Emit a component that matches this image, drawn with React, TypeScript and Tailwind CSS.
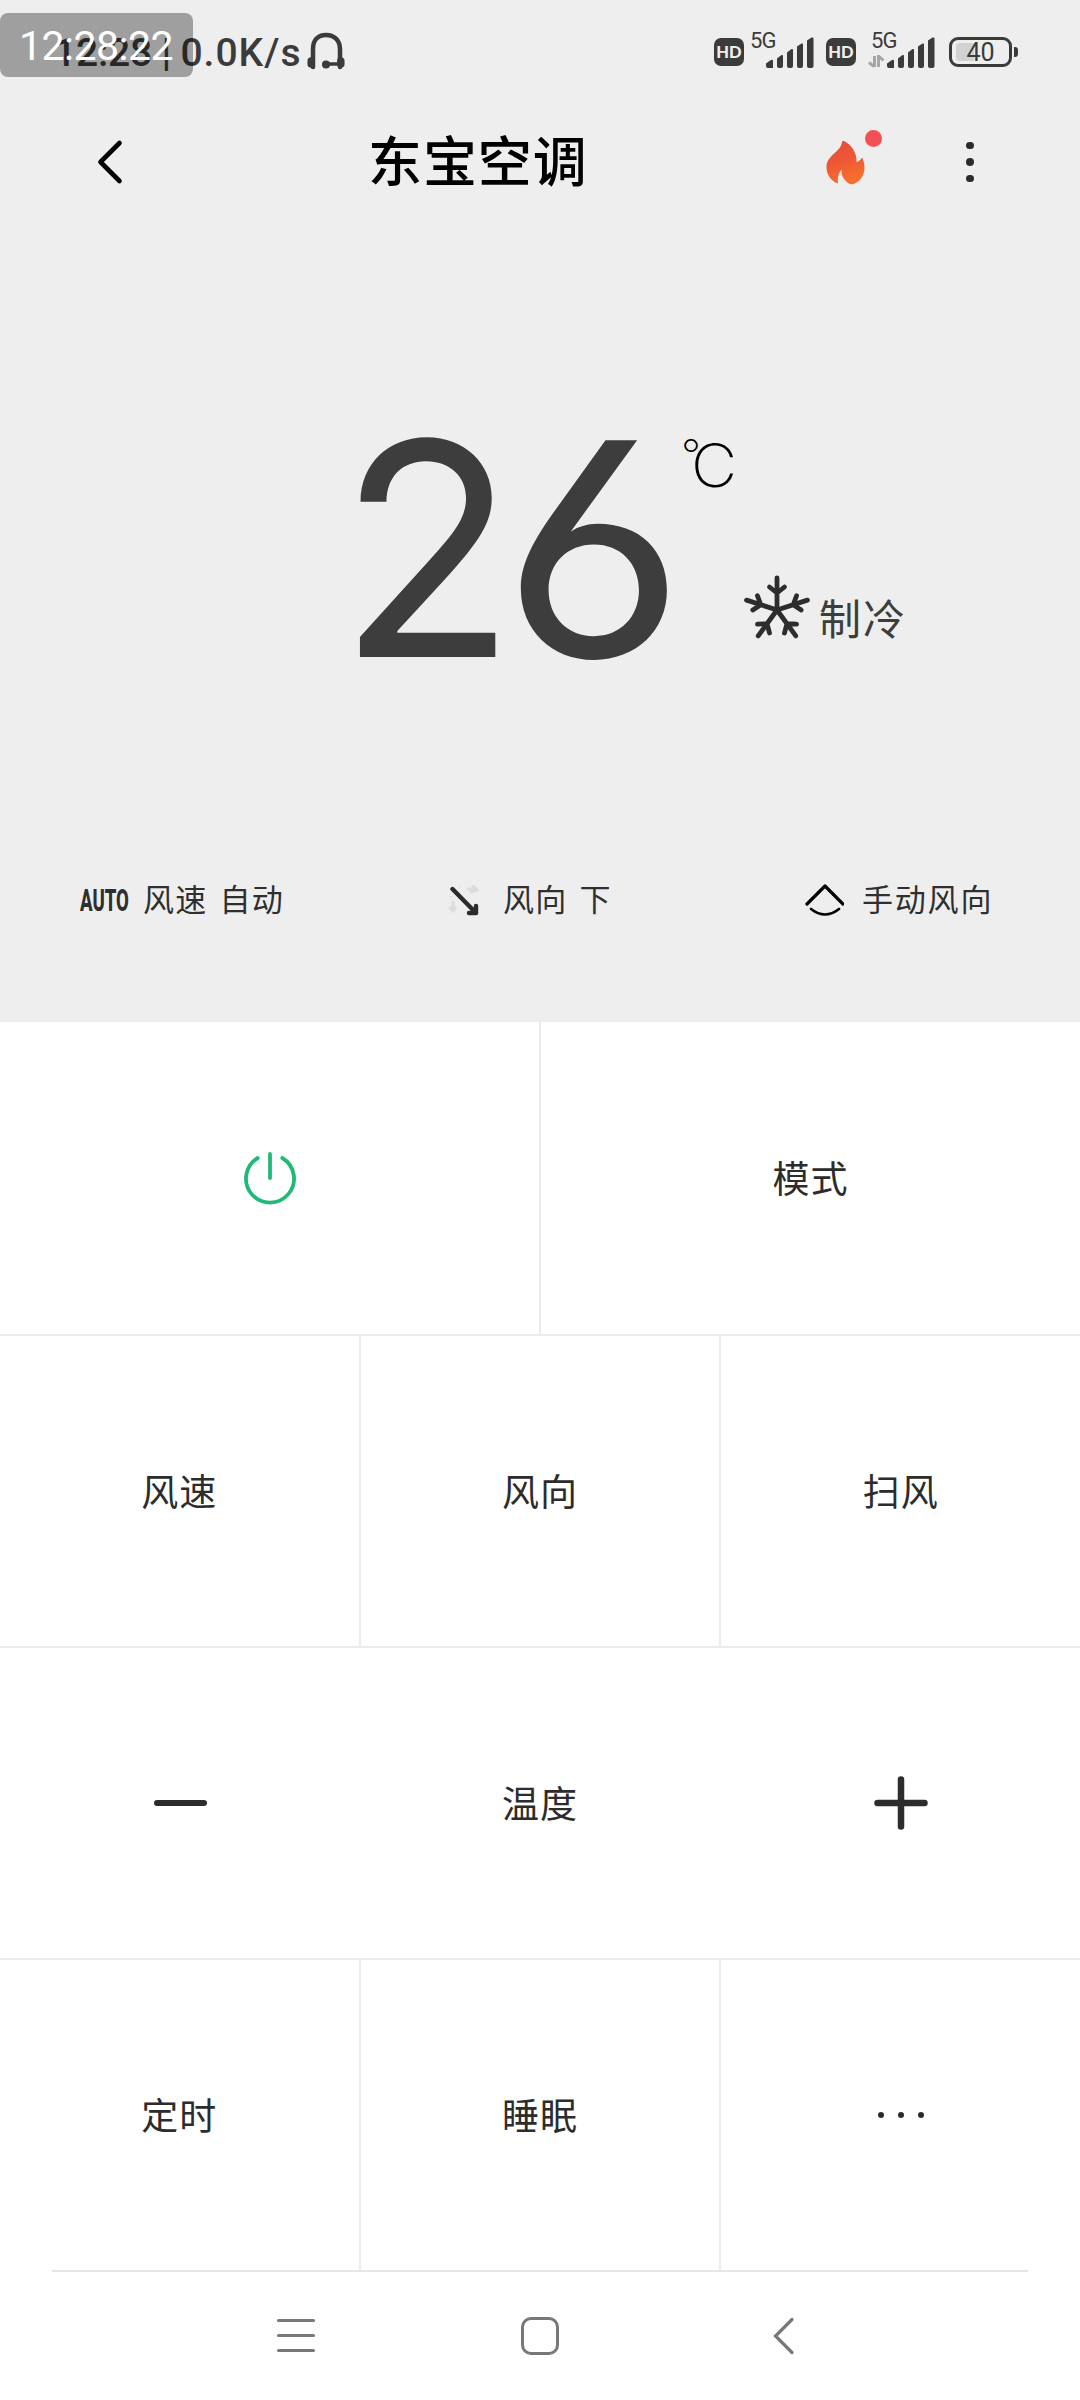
import type { ReactNode } from "react";

function Headphones() {
  return (
    <svg className="ml-[7px] mt-[32px] h-[38px] w-[38px]" viewBox="0 0 38 38" fill="none" stroke="#3b3b3b">
      <path d="M6 35V17C6 8 11 3 19 3s14 5 14 14v18" strokeWidth="4.500" strokeLinecap="round" />
      <path d="M19 32h14" strokeWidth="3.500" />
      <circle cx="19" cy="32.500" r="4" fill="#3b3b3b" stroke="none" />
      <path d="M4.200 29v3M33.800 29v3" strokeWidth="7.500" strokeLinecap="round" />
    </svg>
  );
}

function Hd() {
  return (
    <div className="mt-[38px] flex h-[28px] w-[30px] items-center justify-center rounded-[7px] bg-[#3b3b3b] font-[Lato] text-[16.500px] font-black leading-none text-[#ededed]">
      HD
    </div>
  );
}

function Signal({ data }: { data?: boolean }) {
  return (
    <div className="relative h-[80px] w-[64px]">
      <span className="absolute -left-[1px] top-[30px] text-[22px] leading-[22px] tracking-[-0.8px]">5G</span>
      {data && (
        <svg className="absolute -left-[4px] top-[55px] h-[13px] w-[17px]" viewBox="0 0 17 13" fill="none" stroke="#a5a5a5" strokeWidth="3">
          <path d="M6.500 1v11M1 7.500l5 4M10.500 12V1l5 4.500" />
        </svg>
      )}
      <svg className="absolute left-[15px] top-[37px] h-[31px] w-[48px]" viewBox="0 0 48 31" fill="#3b3b3b">
        <path d="M0 26.500L5 23q2-1 2 1v7H2q-2 0-2-2z" />
        <path d="M11 21.500L15.500 18q1.500-.5 1.500 1v10q0 2-2 2h-2q-2 0-2-2z" />
        <path d="M21 15.500L25.500 12q1.500-.5 1.500 1v16q0 2-2 2h-2q-2 0-2-2z" />
        <path d="M31 9.500L35.500 6.500q1.500-.5 1.500 1v21.500q0 2-2 2h-2q-2 0-2-2z" />
        <path d="M41 3.500L45.500.5q2-.5 2 1v27.500q0 2-2 2h-2.500q-2 0-2-2z" />
      </svg>
    </div>
  );
}

function StatusBar() {
  return (
    <div className="relative flex h-[104px] font-[Roboto] text-[#3b3b3b]">
      <div className="ml-[54px] mt-[30px] w-[246px] whitespace-pre text-[39px] font-medium leading-[46px] tracking-[-0.2px]">
        12:28 | <span className="tracking-[1px]">0.0K/s</span>
      </div>
      <Headphones />
      <div className="ml-auto flex">
        <Hd />
        <div className="ml-[7px]"><Signal /></div>
        <div className="ml-[11px]"><Hd /></div>
        <div className="ml-[16px]"><Signal data /></div>
      </div>
      <div className="relative ml-[13px] mr-[5px] mt-[37px] flex h-[30px] w-[63px] items-center justify-center rounded-[9px] border-[3px] border-[#3b3b3b] text-[25px] leading-none">
        <div className="absolute left-[4px] top-[3px] h-[18px] w-[18px] rounded-l-[4px] bg-[#d2d2d2]"></div>
        <span className="relative">40</span>
      </div>
      <div className="-ml-[3px] mr-[62px] mt-[47px] h-[10px] w-[4px] rounded-r-[3px] bg-[#3b3b3b]"></div>

      {/* recorder clock floats over the status bar */}
      <div className="absolute left-0 top-[13px] h-[64px] w-[193px] rounded-[8px] bg-black/33 pl-[19px] text-[41px] leading-[66px] tracking-[-0.5px] text-white">
        12:28:22
      </div>
    </div>
  );
}

function Header() {
  return (
    <div className="flex h-[116px] items-center">
      <svg className="ml-[94px] h-[48px] w-[32px]" viewBox="0 0 32 48" fill="none" stroke="#000" strokeWidth="4.600" strokeLinecap="round" strokeLinejoin="round">
        <path d="M25.500 5L6.500 24l19 19" />
      </svg>
      <h1 className="-mt-[7px] ml-[242px] w-[225px] whitespace-nowrap text-[54px] font-medium leading-[60px] tracking-[0.9px] text-black">东宝空调</h1>
      <div className="relative ml-[233px] h-[48px] w-[44px]">
        <svg className="h-[48px] w-[44px]" viewBox="0 0 44 48">
          <defs>
            <linearGradient id="fire" x1="0" y1="0" x2="0.300" y2="1">
              <stop offset="0" stopColor="#ea4a42" />
              <stop offset="0.500" stopColor="#ed5637" />
              <stop offset="1" stopColor="#f76f2c" />
            </linearGradient>
          </defs>
          <path
            d="M18 3c8 4 13 12 12.500 21 2.500-.5 4-2 5-4 1.500 0 3 5 3 10 0 8-5 14-11 16-1.500.6-3 .4-4.500-.5-5-3-8-8-7.500-14-3 4-4 8-3.500 14C5 43 .5 37 .5 29 .5 17 15 14 16 4q.5-2 2-1z"
            fill="url(#fire)"
          />
        </svg>
        <div className="absolute -top-[8px] left-[39px] h-[17px] w-[17px] rounded-full bg-[#f25054]"></div>
      </div>
      <div className="ml-[96px] flex flex-col gap-[9px]">
        <div className="h-[7.500px] w-[7.500px] rounded-full bg-[#2b2b2b]"></div>
        <div className="h-[7.500px] w-[7.500px] rounded-full bg-[#2b2b2b]"></div>
        <div className="h-[7.500px] w-[7.500px] rounded-full bg-[#2b2b2b]"></div>
      </div>
    </div>
  );
}

function Snowflake() {
  return (
    <svg className="h-[70px] w-[70px]" viewBox="-35 -35 70 70" fill="none" stroke="#2d2d2d" strokeWidth="4.800" strokeLinecap="round" strokeLinejoin="round">
      {[0, 72, 144, 216, 288].map((a) => (
        <path key={a} d="M0 0V-32M-7.500-23L0-17 7.500-23" transform={`rotate(${a})`} />
      ))}
    </svg>
  );
}

function Display() {
  return (
    <div className="flex h-[610px] pt-[180px] text-[#3d3d3d]">
      <div className="ml-[338px] flex h-[300px] w-[343px] font-[Inter] text-[298px] leading-[298px]">
        <span className="w-[164px] origin-left scale-x-[0.980]">2</span>
        <span className="origin-left scale-x-[1.060] [font-feature-settings:'cv03','cv04']">6</span>
      </div>
      <div className="flex w-[57px] pt-[25px] font-[Inter] text-black">
        <span className="text-[44px] font-extralight leading-[60px]">°</span>
        <span className="-ml-[10px] origin-left scale-x-[1.060] text-[60px] font-extralight leading-[80px]">C</span>
      </div>
      <div className="ml-[4px] mt-[175px] flex h-[70px]">
        <Snowflake />
        <span className="ml-[7px] mt-[12px] text-[42px] font-normal leading-[60px] tracking-[2px]">制冷</span>
      </div>
    </div>
  );
}

function StatusRow() {
  return (
    <div className="flex h-[192px] items-start pt-[45px] text-[31px] leading-[46px] text-[#2f2f2f]">
      <div className="ml-[80px] h-[46px] w-[63px]">
        <span className="inline-block origin-left scale-x-[0.600] font-[Roboto] text-[31px] font-extrabold">AUTO</span>
      </div>
      <span className="w-[304px] tracking-[1.200px] [word-spacing:4px]">风速 自动</span>
      <svg className="mt-[10px] h-[32px] w-[32px]" viewBox="0 0 32 32" fill="none">
        <path d="M12 2h1M20 4h8M25 0l5 5-7 2M4 11v1M6 16v8M2 22l4 4 3-4" stroke="#dcdcdc" strokeWidth="3" />
        <path d="M5.500 4L29 28M29 21v7h-7" stroke="#2b2b2b" strokeWidth="4.400" strokeLinecap="round" strokeLinejoin="round" />
      </svg>
      <span className="ml-[24px] w-[301px] tracking-[1.200px] [word-spacing:4px]">风向 下</span>
      <svg className="mt-[8px] h-[36px] w-[40px]" viewBox="0 0 40 36" fill="none" stroke="#000" strokeWidth="3.200" strokeLinecap="round" strokeLinejoin="round">
        <path d="M3 21L21 3l18 18" />
        <path d="M7 26q14 11 28 0" strokeWidth="2.600" />
      </svg>
      <span className="ml-[18px] tracking-[1.800px]">手动风向</span>
    </div>
  );
}

function Key({ children }: { children: ReactNode }) {
  return <button className="flex flex-1 items-center justify-center pb-[1px]">{children}</button>;
}

function Divider() {
  return <div className="w-[2px] bg-[#ebebeb]"></div>;
}

function Keypad() {
  return (
    <div className="bg-white text-[37px] tracking-[1px] text-[#2c2c2c]">
      <div className="flex h-[312px]">
        <Key>
          <svg className="h-[56px] w-[56px]" viewBox="0 0 56 56" fill="none" stroke="#21b978" strokeWidth="3.800" strokeLinecap="round">
            <path d="M28 4v24M15.700 8a24 24 0 1 0 24.600 0" />
          </svg>
        </Key>
        <Divider />
        <Key>模式</Key>
      </div>
      <div className="flex h-[312px] border-t-2 border-[#ebebeb]">
        <Key>风速</Key>
        <Divider />
        <Key>风向</Key>
        <Divider />
        <Key>扫风</Key>
      </div>
      <div className="flex h-[312px] border-t-2 border-[#ebebeb]">
        <Key>
          <div className="h-[6px] w-[53px] rounded-[3px] bg-[#2d2d2d]"></div>
        </Key>
        <Key>温度</Key>
        <Key>
          <svg className="ml-[2px] h-[54px] w-[54px]" viewBox="0 0 54 54" stroke="#2d2d2d" strokeWidth="6.500" strokeLinecap="round">
            <path d="M27 3.500v47M3.500 27h47" />
          </svg>
        </Key>
      </div>
      <div className="flex h-[312px] border-t-2 border-[#ebebeb]">
        <Key>定时</Key>
        <Divider />
        <Key>睡眠</Key>
        <Divider />
        <Key>
          <div className="flex gap-[14px]">
            <div className="h-[6px] w-[6px] rounded-full bg-[#2c2c2c]"></div>
            <div className="h-[6px] w-[6px] rounded-full bg-[#2c2c2c]"></div>
            <div className="h-[6px] w-[6px] rounded-full bg-[#2c2c2c]"></div>
          </div>
        </Key>
      </div>
    </div>
  );
}

function NavBar() {
  return (
    <div className="h-[130px] bg-white">
      <div className="mx-[52px] h-[2px] bg-[#e6e6e6]"></div>
      <div className="flex h-[127px] items-center pl-[277px]">
        <div className="flex w-[38px] flex-col gap-[12px]">
          <div className="h-[3px] rounded-full bg-[#787878]"></div>
          <div className="h-[3px] rounded-full bg-[#787878]"></div>
          <div className="h-[3px] rounded-full bg-[#787878]"></div>
        </div>
        <div className="ml-[206px] h-[38px] w-[38px] rounded-[10px] border-[3.500px] border-[#787878]"></div>
        <svg className="ml-[214px] h-[38px] w-[22px]" viewBox="0 0 22 38" fill="none" stroke="#787878" strokeWidth="3.200" strokeLinecap="round">
          <path d="M19 2.500L2.500 19 19 35.500" />
        </svg>
      </div>
    </div>
  );
}

export default function App() {
  return (
    <div className="h-[2400px] w-[1080px] overflow-hidden bg-[#eeeeee] font-['Noto_Sans_CJK_SC',sans-serif]">
      <StatusBar />
      <Header />
      <Display />
      <StatusRow />
      <Keypad />
      <NavBar />
    </div>
  );
}
